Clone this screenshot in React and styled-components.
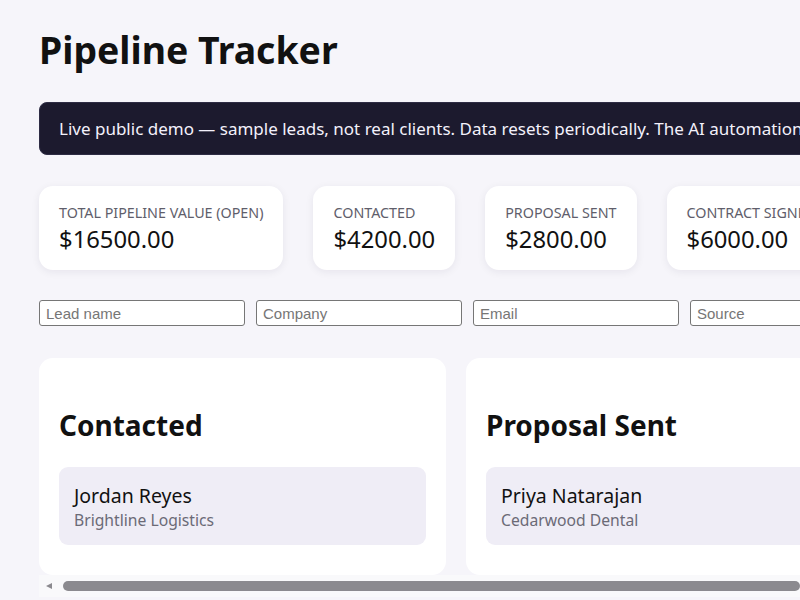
import React from "react";
import styled, { createGlobalStyle } from "styled-components";

const GlobalStyle = createGlobalStyle`
  html, body {
    margin: 0;
    overflow: hidden;
    background: #f6f5fa;
  }
  body {
    font-family: "Noto Sans", "Open Sans", sans-serif;
    color: #111;
  }
`;

const Page = styled.div`
  width: 1180px;
  padding: 19px 40px 0 39px;
`;

const Title = styled.h1`
  margin: 0 0 21px;
  font-size: 37.4px;
  line-height: 62px;
  font-weight: 700;
`;

const Banner = styled.div`
  background: #1c1a2e;
  border: 1px solid #2e2c44;
  border-radius: 8px;
  color: #f3f1fb;
  font-size: 17px;
  line-height: 51px;
  padding: 0 19px;
  white-space: nowrap;
  overflow: hidden;
`;

const Stats = styled.div`
  display: flex;
  gap: 30px;
  margin-top: 31px;
`;

const StatCard = styled.div`
  background: #fff;
  border-radius: 14px;
  padding: 17px 20px 16px;
  box-shadow: 0 2px 8px rgba(30, 20, 60, 0.07);
  white-space: nowrap;
`;

const StatLabel = styled.div`
  font-size: 14.3px;
  color: #5f5e6b;
  text-transform: uppercase;
  line-height: 20px;
`;

const StatValue = styled.div`
  font-size: 23.8px;
  line-height: 30px;
  margin-top: 1px;
`;

const Form = styled.div`
  display: flex;
  gap: 11px;
  margin-top: 30px;
`;

const Field = styled.input`
  box-sizing: border-box;
  width: 206px;
  height: 26px;
  padding: 1px 6px;
  border: 1px solid #767676;
  border-radius: 3px;
  background: #fff;
  font-family: "Liberation Sans", Arial, sans-serif;
  font-size: 15px;
  color: #222;
  &::placeholder {
    color: #767676;
  }
`;

const AddButton = styled.button`
  height: 26px;
  padding: 0 12px;
  font-family: "Liberation Sans", Arial, sans-serif;
  font-size: 15px;
`;

const BoardWrap = styled.div`
  margin-top: 32px;
  width: 761px;
  background: #f9f9fb;
`;

const Board = styled.div`
  display: flex;
  gap: 20px;
  overflow: hidden;
  background: #f6f5fa;
`;

const ScrollRail = styled.div`
  display: flex;
  align-items: center;
  gap: 11px;
  height: 10px;
  padding: 6px 0 6px 7px;
`;

const ScrollArrow = styled.span`
  width: 0;
  height: 0;
  border-top: 3.5px solid transparent;
  border-bottom: 3.5px solid transparent;
  border-right: 6px solid #8b8a8f;
`;

const ScrollThumb = styled.div`
  flex: 1;
  height: 10px;
  border-radius: 5px;
  background: #8b8a8f;
`;

const Column = styled.section`
  flex: 0 0 407px;
  box-sizing: border-box;
  background: #fff;
  border-radius: 14px;
  padding: 48px 20px 30px;
`;

const ColumnTitle = styled.h2`
  margin: 0 0 23px;
  font-size: 28px;
  line-height: 38px;
  font-weight: 700;
`;

const LeadCard = styled.div`
  background: #efedf6;
  border-radius: 9px;
  padding: 15px 15px 14px;
`;

const LeadName = styled.div`
  font-size: 19.5px;
  line-height: 28px;
`;

const LeadCompany = styled.div`
  font-size: 15.7px;
  line-height: 21px;
  color: #6b6a76;
`;

const stats = [
  { label: "Total pipeline value (open)", value: 16500 },
  { label: "Contacted", value: 4200 },
  { label: "Proposal sent", value: 2800 },
  { label: "Contract signed", value: 6000 },
];

const columns = [
  { title: "Contacted", leads: [{ name: "Jordan Reyes", company: "Brightline Logistics" }] },
  { title: "Proposal Sent", leads: [{ name: "Priya Natarajan", company: "Cedarwood Dental" }] },
  { title: "Contract Signed", leads: [{ name: "Marcus Hale", company: "Summit Roofing Co." }] },
  { title: "Lost", leads: [] },
];

export default function App() {
  return (
    <>
      <GlobalStyle />
      <Page>
        <Title>Pipeline Tracker</Title>
        <Banner>
          Live public demo — sample leads, not real clients. Data resets periodically. The AI automation
          features are disabled in this demo.
        </Banner>

        <Stats>
          {stats.map((s) => (
            <StatCard key={s.label}>
              <StatLabel>{s.label}</StatLabel>
              <StatValue>${s.value.toFixed(2)}</StatValue>
            </StatCard>
          ))}
        </Stats>

        <Form>
          <Field placeholder="Lead name" />
          <Field placeholder="Company" />
          <Field placeholder="Email" />
          <Field placeholder="Source" />
          <Field placeholder="Value" />
          <AddButton>Add lead</AddButton>
        </Form>

        <BoardWrap>
          <Board>
            {columns.map((col) => (
              <Column key={col.title}>
                <ColumnTitle>{col.title}</ColumnTitle>
                {col.leads.map((lead) => (
                  <LeadCard key={lead.name}>
                    <LeadName>{lead.name}</LeadName>
                    <LeadCompany>{lead.company}</LeadCompany>
                  </LeadCard>
                ))}
              </Column>
            ))}
          </Board>
          <ScrollRail>
            <ScrollArrow />
            <ScrollThumb />
          </ScrollRail>
        </BoardWrap>
      </Page>
    </>
  );
}
